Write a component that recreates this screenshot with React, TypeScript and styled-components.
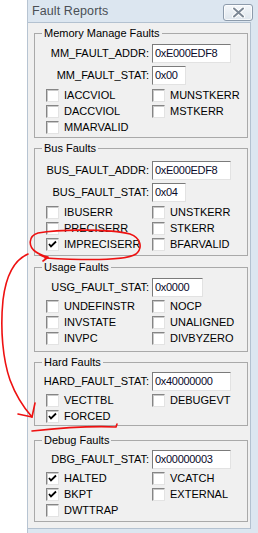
import React from 'react';
import styled, { createGlobalStyle } from 'styled-components';

const GlobalStyle = createGlobalStyle`
  html, body {
    margin: 0;
    padding: 0;
    background: #ffffff;
  }
  body {
    font-family: "Liberation Sans", Arial, sans-serif;
    font-size: 11px;
    color: #000;
  }
`;

interface Field {
  name: string;
  value: string;
  width: number;
}

interface Flag {
  name: string;
  checked?: boolean;
}

interface Group {
  title: string;
  fields: Field[];
  flags: Flag[];
  gapTop: number;
  padTop: number;
  flagGap: number;
  padBottom: number;
}

const groups: Group[] = [
  {
    title: 'Memory Manage Faults',
    gapTop: 3,
    padTop: 2,
    flagGap: 1,
    padBottom: 2,
    fields: [
      { name: 'MM_FAULT_ADDR:', value: '0xE000EDF8', width: 79 },
      { name: 'MM_FAULT_STAT:', value: '0x00', width: 34 },
    ],
    flags: [
      { name: 'IACCVIOL' },
      { name: 'MUNSTKERR' },
      { name: 'DACCVIOL' },
      { name: 'MSTKERR' },
      { name: 'MMARVALID' },
    ],
  },
  {
    title: 'Bus Faults',
    gapTop: 3,
    padTop: 4,
    flagGap: 1,
    padBottom: 3,
    fields: [
      { name: 'BUS_FAULT_ADDR:', value: '0xE000EDF8', width: 79 },
      { name: 'BUS_FAULT_STAT:', value: '0x04', width: 34 },
    ],
    flags: [
      { name: 'IBUSERR' },
      { name: 'UNSTKERR' },
      { name: 'PRECISERR' },
      { name: 'STKERR' },
      { name: 'IMPRECISERR', checked: true },
      { name: 'BFARVALID' },
    ],
  },
  {
    title: 'Usage Faults',
    gapTop: 4,
    padTop: 2,
    flagGap: 0,
    padBottom: 5,
    fields: [{ name: 'USG_FAULT_STAT:', value: '0x0000', width: 51 }],
    flags: [
      { name: 'UNDEFINSTR' },
      { name: 'NOCP' },
      { name: 'INVSTATE' },
      { name: 'UNALIGNED' },
      { name: 'INVPC' },
      { name: 'DIVBYZERO' },
    ],
  },
  {
    title: 'Hard Faults',
    gapTop: 3,
    padTop: 1,
    flagGap: 0,
    padBottom: 1,
    fields: [{ name: 'HARD_FAULT_STAT:', value: '0x40000000', width: 79 }],
    flags: [
      { name: 'VECTTBL' },
      { name: 'DEBUGEVT' },
      { name: 'FORCED', checked: true },
    ],
  },
  {
    title: 'Debug Faults',
    gapTop: 7,
    padTop: 1,
    flagGap: 0,
    padBottom: 3,
    fields: [{ name: 'DBG_FAULT_STAT:', value: '0x00000003', width: 79 }],
    flags: [
      { name: 'HALTED', checked: true },
      { name: 'VCATCH' },
      { name: 'BKPT', checked: true },
      { name: 'EXTERNAL' },
      { name: 'DWTTRAP' },
    ],
  },
];

const Page = styled.div`
  position: relative;
  width: 258px;
  height: 533px;
  overflow: hidden;
  padding-left: 27px;
  box-sizing: border-box;
`;

const Window = styled.div`
  width: 231px;
  height: 533px;
  box-sizing: border-box;
  background: #dce6f0;
  border-left: 1px solid #b7c4d2;
  padding: 0 7px 4px 0;
  display: flex;
  flex-direction: column;
`;

const TitleBar = styled.div`
  height: 22px;
  flex: none;
  display: flex;
  align-items: center;
  justify-content: space-between;
  padding-left: 4px;
`;

const Title = styled.span`
  font-size: 12.5px;
  color: #4a4f55;
  letter-spacing: 0.1px;
`;

const CloseButton = styled.div`
  width: 30px;
  height: 17px;
  margin-right: -2px;
  margin-top: 2px;
  box-sizing: border-box;
  border: 1px solid #8d9bab;
  border-radius: 3px;
  background: linear-gradient(#f4f7fa, #dfe6ed);
  box-shadow: inset 0 0 0 1px rgba(255, 255, 255, 0.7);
  display: flex;
  align-items: center;
  justify-content: center;
`;

const Panel = styled.div`
  flex: 1;
  background: #f0f0f0;
  border-top: 1px solid #b3c1d0;
  border-right: 1px solid #b3c1d0;
  border-bottom: 1px solid #b3c1d0;
  display: flex;
  flex-direction: column;
`;

const GroupBox = styled.fieldset<{ $gapTop: number; $padBottom: number }>`
  margin: ${(p) => p.$gapTop}px 2px 0 6px;
  padding: 0 3px ${(p) => p.$padBottom}px 3px;
  border: 1px solid #a9a9a9;
  min-width: 0;
`;

const Legend = styled.legend`
  margin-left: 4px;
  padding: 0 2px;
  font-size: 11px;
  line-height: 14px;
  color: #000;
`;

const FieldGrid = styled.div<{ $padTop: number }>`
  display: grid;
  grid-template-columns: 111px auto;
  grid-auto-rows: 22px;
  column-gap: 3px;
  align-items: center;
  padding-top: ${(p) => p.$padTop}px;
`;

const FieldLabel = styled.span`
  justify-self: end;
  white-space: nowrap;
`;

const ValueBox = styled.div<{ $width: number }>`
  width: ${(p) => p.$width}px;
  height: 19px;
  box-sizing: border-box;
  background: #fff;
  border: 1px solid;
  border-color: #7b7b7b #e2e2e2 #e2e2e2 #7b7b7b;
  padding-left: 2px;
  line-height: 17px;
  white-space: nowrap;
  overflow: hidden;
  letter-spacing: -0.3px;
  color: #0a0a2a;
`;

const FlagGrid = styled.div<{ $gap: number }>`
  display: grid;
  grid-template-columns: 106px 1fr;
  grid-auto-rows: 16px;
  padding-left: 8px;
  margin-top: ${(p) => p.$gap}px;
`;

const FlagItem = styled.div`
  display: flex;
  align-items: center;
  gap: 5px;
  white-space: nowrap;
`;

const Box = styled.span`
  width: 13px;
  height: 13px;
  box-sizing: border-box;
  background: #fff;
  border: 1px solid;
  border-color: #858585 #e3e3e3 #e3e3e3 #858585;
  box-shadow: inset 1px 1px 0 #c9c9c9;
  display: flex;
  align-items: center;
  justify-content: center;
  flex: none;
`;

const Ink = styled.svg`
  position: absolute;
  left: 0;
  top: 0;
  pointer-events: none;
`;

function Check() {
  return (
    <svg width="9" height="9" viewBox="0 0 9 9">
      <path d="M1 4 L3 6.5 L8 1.5" fill="none" stroke="#000" strokeWidth="1.8" />
    </svg>
  );
}

function CloseGlyph() {
  return (
    <svg width="13" height="11" viewBox="0 0 13 11">
      <path d="M2 1.5 L11 9.5 M11 1.5 L2 9.5" stroke="#ffffff" strokeWidth="4" strokeLinecap="round" />
      <path d="M2 1.5 L11 9.5 M11 1.5 L2 9.5" stroke="#7d8895" strokeWidth="2" strokeLinecap="round" />
    </svg>
  );
}

function FaultGroup({ group }: { group: Group }) {
  return (
    <GroupBox $gapTop={group.gapTop} $padBottom={group.padBottom}>
      <Legend>{group.title}</Legend>
      <FieldGrid $padTop={group.padTop}>
        {group.fields.map((f) => (
          <React.Fragment key={f.name}>
            <FieldLabel>{f.name}</FieldLabel>
            <ValueBox $width={f.width}>{f.value}</ValueBox>
          </React.Fragment>
        ))}
      </FieldGrid>
      <FlagGrid $gap={group.flagGap}>
        {group.flags.map((fl) => (
          <FlagItem key={fl.name}>
            <Box>{fl.checked && <Check />}</Box>
            {fl.name}
          </FlagItem>
        ))}
      </FlagGrid>
    </GroupBox>
  );
}

export default function App() {
  return (
    <Page>
      <GlobalStyle />
      <Window>
        <TitleBar>
          <Title>Fault Reports</Title>
          <CloseButton>
            <CloseGlyph />
          </CloseButton>
        </TitleBar>
        <Panel>
          {groups.map((g) => (
            <FaultGroup key={g.title} group={g} />
          ))}
        </Panel>
      </Window>
      {/* red pen marks drawn over the dialog */}
      <Ink width="258" height="533" viewBox="0 0 258 533">
        <g fill="none" stroke="#ee1111" strokeWidth="1.6" strokeLinecap="round" strokeLinejoin="round">
          <path d="M45 258 C80 260, 125 261, 136 254 C143 248, 141 238, 130 234 C110 229, 60 229, 38 233 C28 236, 28 247, 36 252 C40 255, 44 256, 48 257" />
          <path d="M40 255 L47 258 L43 261" />
          <path d="M28 254 C14 260, 6 275, 3 300 C0 330, 3 360, 10 380 C16 396, 24 408, 32 417" />
          <path d="M18 414 L32 417 L35 403" />
          <path d="M32 431 C60 428, 95 426, 116 427 L117 424" />
        </g>
      </Ink>
    </Page>
  );
}
